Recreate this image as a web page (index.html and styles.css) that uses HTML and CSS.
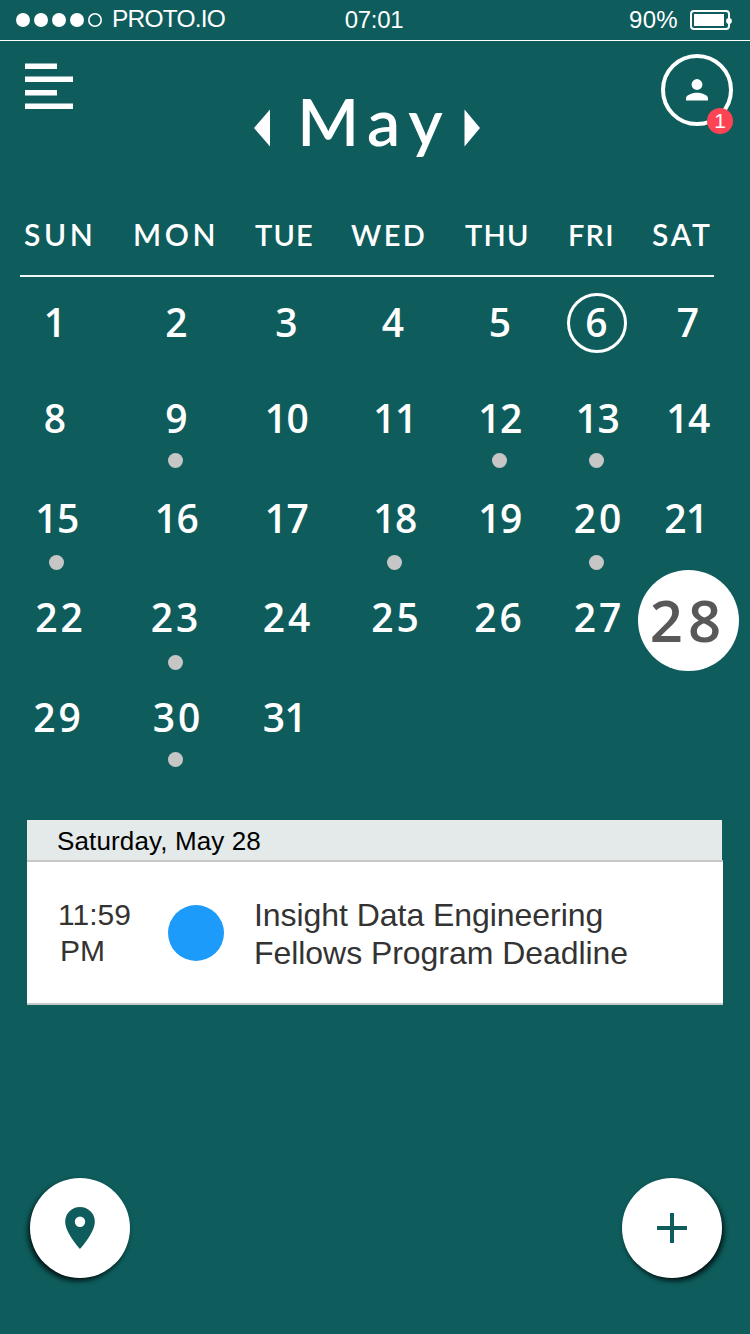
FILE: index.html
```html
<!DOCTYPE html>
<html lang="en">
<head>
<meta charset="utf-8">
<title>Calendar</title>
<link rel="stylesheet" href="styles.css">
</head>
<body>
<div class="screen">
  <header class="status">
    <div class="carrier">
      <svg width="88" height="16" viewBox="0 0 88 16"><g fill="#fff"><circle cx="7" cy="8" r="7"/><circle cx="25" cy="8" r="7"/><circle cx="43" cy="8" r="7"/><circle cx="61" cy="8" r="7"/></g><circle cx="79" cy="8" r="6.200" fill="none" stroke="#fff" stroke-width="1.6"/></svg>
      <span class="carrier-name">PROTO.IO</span>
    </div>
    <span class="clock">07:01</span>
    <div class="power">
      <span>90%</span>
      <svg width="42" height="20" viewBox="0 0 42 20"><rect x="1" y="1" width="38" height="18" rx="3" fill="none" stroke="#fff" stroke-width="2"/><rect x="4" y="4" width="30" height="12" fill="#fff"/><circle cx="39" cy="11" r="2.900" fill="#fff"/></svg>
    </div>
  </header>

  <nav class="topbar">
    <svg class="menu" width="48" height="46" viewBox="0 0 48 46" fill="#fff"><path d="M0 .4h32v5.500H0zM0 13.400h48v5.600H0zM0 27h32v5.600H0zM0 40.400h48v5.500H0z"/></svg>
    <div class="month">
      <svg width="17" height="38" viewBox="0 0 17 38"><path d="M0 19 16 .5v37z" fill="#fff"/></svg>
      <h1 class="month-name">May</h1>
      <svg width="17" height="38" viewBox="0 0 17 38"><path d="M16 19 .5.5v37z" fill="#fff"/></svg>
    </div>
    <div class="profile">
      <svg width="72" height="72" viewBox="0 0 72 72"><circle cx="36" cy="36" r="34" fill="none" stroke="#fff" stroke-width="4"/><circle cx="36" cy="30.500" r="5.400" fill="#fff"/><path d="M25 46.500v-2.200c0-3.800 7.300-5.600 11-5.600s11 1.800 11 5.600v2.200z" fill="#fff"/></svg>
      <span class="badge">1</span>
    </div>
  </nav>

  <main>
    <div class="weekdays"><span>SUN</span><span>MON</span><span>TUE</span><span>WED</span><span>THU</span><span>FRI</span><span>SAT</span></div>
    <div class="days">
      <div class="day l2"><b>1</b></div><div class="day"><b>2</b></div><div class="day"><b>3</b></div><div class="day l2"><b>4</b></div><div class="day"><b>5</b></div><div class="day today"><b>6</b></div><div class="day"><b>7</b></div>
      <div class="day l2"><b>8</b></div><div class="day event"><b>9</b></div><div class="day narrow"><b>10</b></div><div class="day narrow"><b>11</b></div><div class="day event narrow"><b>12</b></div><div class="day event narrow"><b>13</b></div><div class="day narrow"><b>14</b></div>
      <div class="day event narrow"><b>15</b></div><div class="day narrow"><b>16</b></div><div class="day narrow"><b>17</b></div><div class="day event narrow"><b>18</b></div><div class="day narrow"><b>19</b></div><div class="day event"><b>20</b></div><div class="day l2 narrow"><b>21</b></div>
      <div class="day r2"><b>22</b></div><div class="day event l2"><b>23</b></div><div class="day"><b>24</b></div><div class="day"><b>25</b></div><div class="day l2"><b>26</b></div><div class="day"><b>27</b></div><div class="day selected"><b>28</b></div>
      <div class="day"><b>29</b></div><div class="day event"><b>30</b></div><div class="day l2 narrow"><b>31</b></div>
    </div>

    <section class="agenda">
      <h2 class="agenda-date">Saturday, May 28</h2>
      <article class="entry">
        <div class="entry-time">11:59<br><span class="meridiem">PM</span></div>
        <div class="entry-mark"></div>
        <div class="entry-title">Insight Data Engineering<br>Fellows Program Deadline</div>
      </article>
    </section>
  </main>

  <footer class="actions">
    <button class="fab fab-left" aria-label="Location"><svg width="30" height="42" viewBox="0 0 30 42"><path fill="#0e5c5c" fill-rule="evenodd" d="M15 0A14.800 14.800 0 0 0 .2 14.800C.2 26 15 42 15 42s14.800-16 14.800-27.200A14.800 14.800 0 0 0 15 0zm0 20a5.200 5.200 0 1 1 0-10.400A5.200 5.200 0 0 1 15 20z"/></svg></button>
    <button class="fab fab-right" aria-label="Add"><svg width="30" height="30" viewBox="0 0 30 30"><path fill="#0e5c5c" d="M13 0h4v13h13v4H17v13h-4V17H0v-4h13z"/></svg></button>
  </footer>
</div>
</body>
</html>
```

FILE: styles.css
```css
* { box-sizing: border-box; }
body { margin: 0; background: #0e5c5c; }
h1, h2 { margin: 0; font-weight: 400; }
svg { display: block; flex: none; }

.screen {
  width: 750px;
  height: 1334px;
  overflow: hidden;
  display: flex;
  flex-direction: column;
  background: #0e5c5c;
  color: #fff;
  font-family: "Liberation Sans", Arial, sans-serif;
}

.status {
  flex: none;
  height: 41px;
  padding: 0 18px 1px 16px;
  border-bottom: 1px solid #fff;
  display: grid;
  grid-template-columns: 1fr auto 1fr;
  align-items: center;
  font-size: 24px;
  line-height: 38px;
}
.carrier { display: flex; align-items: center; gap: 8px; }
.carrier-name { letter-spacing: -0.8px; font-size: 24.5px; margin-bottom: 2px; }
.clock { letter-spacing: -0.3px; }
.power { display: flex; align-items: center; justify-content: flex-end; gap: 12px; letter-spacing: 0.3px; }

.topbar {
  flex: none;
  height: 171px;
  display: flex;
  justify-content: space-between;
  align-items: flex-start;
  padding: 13px 17px 0 25px;
}
.menu { margin-top: 9px; }
.month { display: flex; align-items: center; margin: 27px 0 0 0; height: 94px; width: 227px; justify-content: space-between; }
.month-name {
  font-family: Lato, sans-serif;
  font-weight: 600;
  font-size: 66px;
  line-height: 80px;
  letter-spacing: 9px;
  margin-right: -9px;
  padding: 0 0 14px 6px;
}
.profile { position: relative; width: 72px; height: 72px; }
.badge {
  position: absolute;
  right: 0;
  bottom: -8px;
  width: 26px;
  height: 26px;
  border-radius: 50%;
  background: #fe4454;
  font-size: 21px;
  line-height: 26px;
  text-align: center;
}

.weekdays {
  display: grid;
  grid-template-columns: 109px 122px 96px 114px 103px 84px 1fr;
  width: 694px;
  height: 65px;
  margin-left: 20px;
  padding-left: 4px;
  border-bottom: 2px solid #f0f5f5;
  font-family: Lato, sans-serif;
  font-weight: 600;
  font-size: 30px;
  line-height: 45px;
  letter-spacing: 3.6px;
  white-space: nowrap;
}
.weekdays span:nth-child(3), .weekdays span:nth-child(5), .weekdays span:nth-child(6) { font-size: 29px; letter-spacing: 1.2px; }
.weekdays span:nth-child(4) { font-size: 29px; letter-spacing: 2.4px; }
.weekdays span:nth-child(7) { letter-spacing: 2.8px; }

.days {
  display: grid;
  grid-template-columns: 114px 125px 95px 122px 88px 107px 74px;
  grid-template-rows: 96px 100px 99px 100px 126px;
  padding-top: 22px;
  font-family: "Open Sans", sans-serif;
  font-size: 39px;
  line-height: 46px;
}
.day { display: flex; flex-direction: column; align-items: center; }
.day b { font-weight: 600; letter-spacing: 3px; margin-right: -3px; }
.l2 b { margin-left: -4px; }
.r2 b { margin-left: 4px; }
.narrow b { letter-spacing: -0.5px; margin-right: 0; }
.event::after {
  content: "";
  width: 15px;
  height: 15px;
  margin: 12px 2px 0 0;
  border-radius: 50%;
  background: #c6c6c6;
}
.day:nth-child(n+15):nth-child(-n+21)::after { margin-top: 14px; }
.day:nth-child(n+22):nth-child(-n+28)::after { margin-top: 15px; }
.today b {
  width: 60px;
  height: 60px;
  margin: -6px 1px 0 0;
  border: 3px solid #fff;
  border-radius: 50%;
  line-height: 52px;
  text-align: center;
  text-indent: 2px;
}
.selected b {
  width: 101px;
  height: 101px;
  flex: none;
  margin: -24px 0 0;
  border-radius: 50%;
  background: #fff;
  color: #585858;
  font-size: 58px;
  line-height: 99px;
  letter-spacing: 5px;
  text-align: center;
}

.agenda { width: 696px; margin-left: 27px; }
.agenda-date {
  width: 695px;
  height: 40px;
  padding-left: 30px;
  background: #e4e9e9;
  color: #000;
  font-size: 26px;
  line-height: 42px;
  letter-spacing: 0.13px;
}
.entry {
  display: flex;
  height: 145px;
  padding-left: 31px;
  border-top: 2px solid #c8c8c8;
  border-bottom: 2px solid #c8c8c8;
  background: #fff;
  color: #333;
}
.entry-time { width: 110px; padding-top: 35px; font-size: 30px; line-height: 36px; }
.meridiem { margin-left: 2px; }
.entry-mark { width: 56px; height: 56px; margin: 43px 30px 0 0; border-radius: 50%; background: #1d9bfb; }
.entry-title { padding-top: 34px; font-size: 32px; line-height: 38px; letter-spacing: -0.05px; white-space: nowrap; }

.actions { margin-top: auto; padding: 0 28px 56px 30px; display: flex; justify-content: space-between; }
.fab {
  width: 100px;
  height: 100px;
  padding: 0;
  border: 0;
  border-radius: 50%;
  background: #fff;
  display: flex;
  align-items: center;
  justify-content: center;
}
.fab-left { box-shadow: -2px 3px 5px #000c; }
.fab-right { box-shadow: 2px 3px 5px #000c; }
```
